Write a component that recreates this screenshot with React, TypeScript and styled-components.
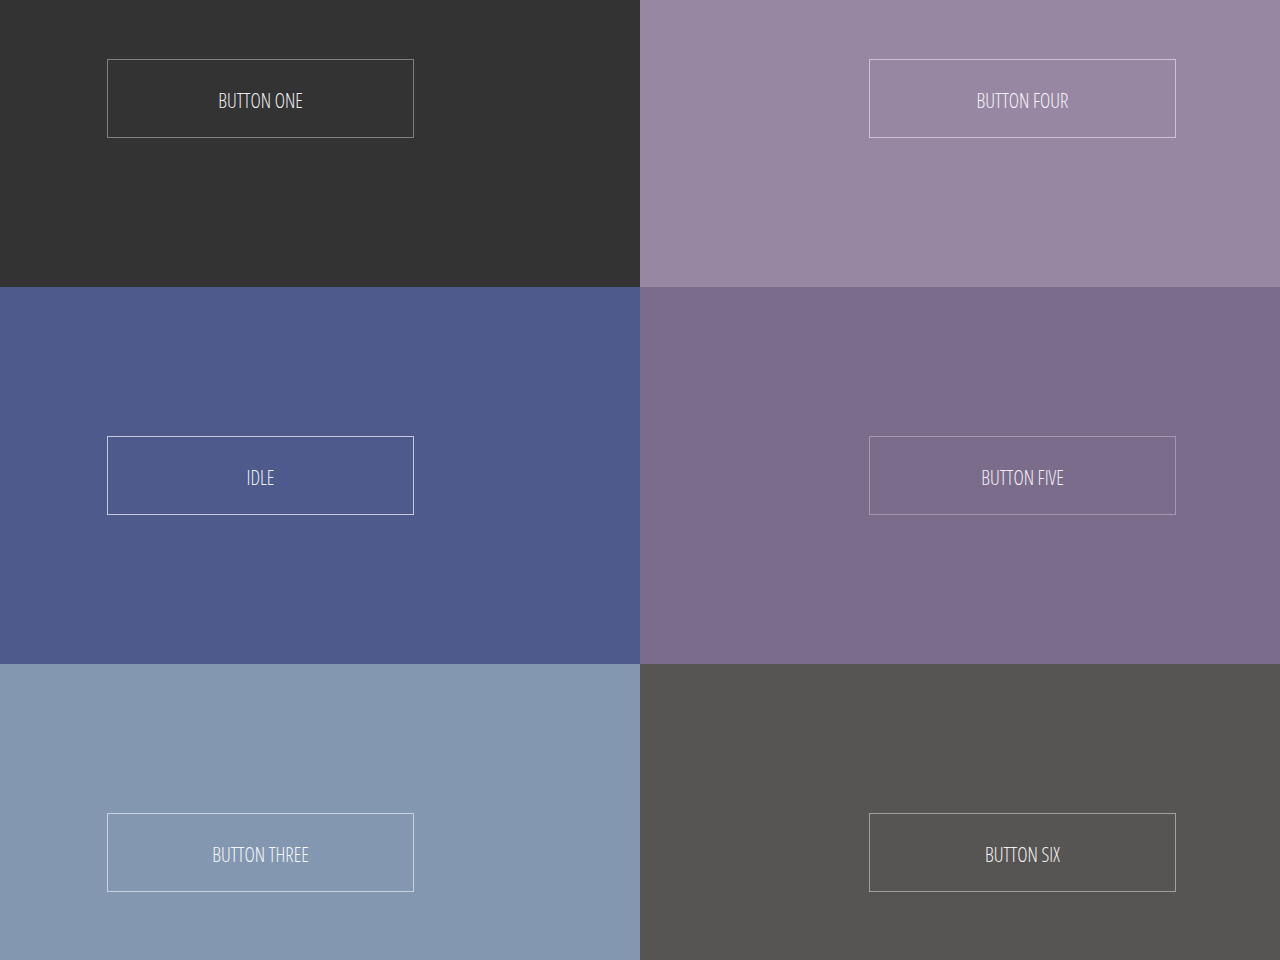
import React from "react";
import styled, { createGlobalStyle } from "styled-components";

const Global = createGlobalStyle`
  html, body { margin: 0; padding: 0; height: 100%; }
  body { font-family: "Open Sans", "Liberation Sans", sans-serif; overflow: hidden; }
`;

const Page = styled.div`
  display: grid;
  grid-template-columns: 1fr 1fr;
  width: 1280px;
  height: 960px;
`;

const Column = styled.div`
  display: flex;
  flex-direction: column;
`;

const Section = styled.section<{ $bg: string; $h: number; $pt: number; $side: "left" | "right" }>`
  background: ${(p) => p.$bg};
  height: ${(p) => p.$h}px;
  box-sizing: border-box;
  padding-top: ${(p) => p.$pt}px;
  display: flex;
  align-items: flex-start;
  justify-content: ${(p) => (p.$side === "left" ? "flex-start" : "flex-end")};
  padding-left: ${(p) => (p.$side === "left" ? "107px" : "0")};
  padding-right: ${(p) => (p.$side === "right" ? "104px" : "0")};
`;

const Button = styled.button<{ $border: string; $color: string }>`
  width: 307px;
  height: 79px;
  box-sizing: border-box;
  background: transparent;
  border: 1px solid ${(p) => p.$border};
  color: ${(p) => p.$color};
  font-family: "Open Sans", "Liberation Sans", sans-serif;
  font-weight: 300;
  font-stretch: 75%;
  font-size: 19.5px;
  letter-spacing: 0;
  text-transform: uppercase;
  display: flex;
  align-items: center;
  justify-content: center;
  padding: 3px 0 0;
  cursor: pointer;
`;

const Label = styled.span`
  display: inline-block;
`;

type Item = { label: string; bg: string; border: string; color: string; h: number; pt: number };

const left: Item[] = [
  { label: "Button One", bg: "#333333", border: "#808080", color: "#eeeef2", h: 287, pt: 59 },
  { label: "Idle", bg: "#4d5a8b", border: "#c4c9de", color: "#eceef6", h: 377, pt: 149 },
  { label: "Button Three", bg: "#8397b0", border: "#c8d2de", color: "#f5f7fa", h: 296, pt: 149 },
];

const right: Item[] = [
  { label: "Button Four", bg: "#9787a3", border: "#cdc2d5", color: "#f6f2f8", h: 287, pt: 59 },
  { label: "Button Five", bg: "#7b6c8b", border: "#a497b3", color: "#f2eef6", h: 377, pt: 149 },
  { label: "Button Six", bg: "#575553", border: "#a3a1a0", color: "#f3f2f4", h: 296, pt: 149 },
];

const renderColumn = (items: Item[], side: "left" | "right") => (
  <Column>
    {items.map((it) => (
      <Section key={it.label} $bg={it.bg} $h={it.h} $pt={it.pt} $side={side}>
        <Button $border={it.border} $color={it.color}>
          <Label>{it.label}</Label>
        </Button>
      </Section>
    ))}
  </Column>
);

export default function App() {
  return (
    <>
      <Global />
      <Page>
        {renderColumn(left, "left")}
        {renderColumn(right, "right")}
      </Page>
    </>
  );
}
